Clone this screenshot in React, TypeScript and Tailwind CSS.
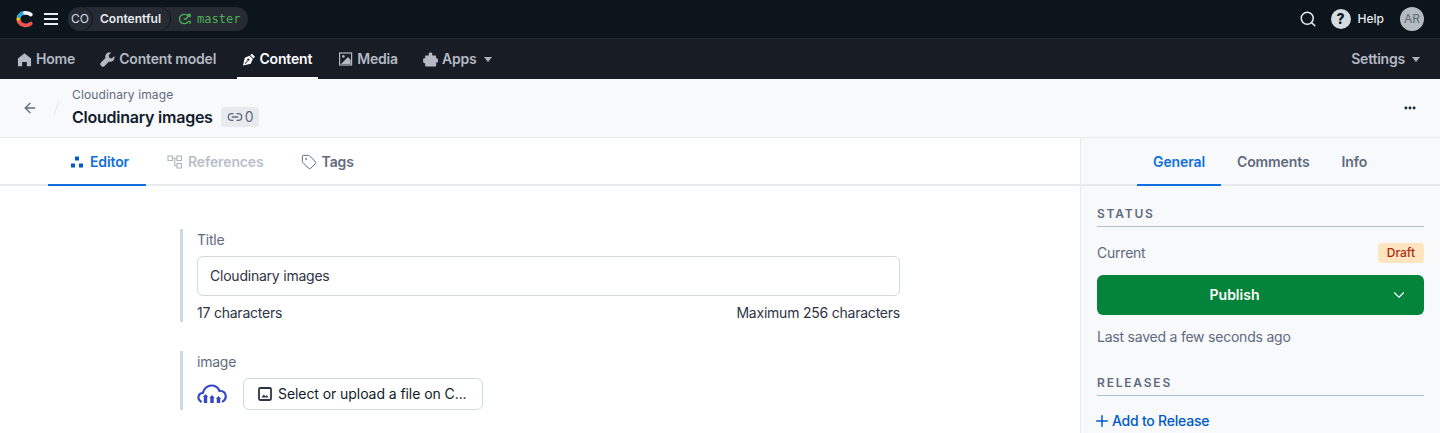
import type { ReactNode } from "react";
import { ArrowLeft, ChevronDown, Link2, MoreHorizontal, Plus, Search, Tag } from "lucide-react";

function Logo() {
  return (
    <svg width="18" height="18" viewBox="0 0 18 18" fill="none" strokeWidth="3.8" strokeLinecap="round">
      <path d="M3 11.500A6.300 6.300 0 0 1 3 6.500" stroke="#ffda00" />
      <path d="M14.800 13.600C11.500 16.300 5.400 16.100 3 11.700" stroke="#ee5350" />
      <path d="M3 6.400A6.400 6.400 0 0 1 8.500 2.800" stroke="#2fa8e0" />
      <path d="M9 2.800C11.300 2.700 13.300 3.300 14.800 4.500" stroke="#f5f7f9" />
    </svg>
  );
}

function HomeIcon() {
  return (
    <svg width="15" height="15" viewBox="0 0 16 16" fill="currentColor">
      <path d="M8 1.200 1 7v7.600c0 .4.3.7.7.7h3.800v-4.600h5v4.600h3.800c.4 0 .7-.3.7-.7V7z" />
    </svg>
  );
}

function WrenchIcon() {
  return (
    <svg width="15" height="15" viewBox="0 0 16 16" fill="currentColor">
      <path d="M15.200 4.200 12.600 6.800 9.900 6.200 9.200 3.500 11.900.9C9.800.2 7.800.8 6.700 2 5.600 3.200 5.300 4.800 5.800 6.300L.8 11.400c-.8.8-.8 2.100 0 2.900l.9.9c.8.8 2.100.8 2.900 0l5.100-5c1.500.5 3.100.2 4.300-.9 1.200-1.200 1.800-3.100 1.200-5.100z" />
    </svg>
  );
}

function PenIcon() {
  return (
    <svg width="15" height="15" viewBox="0 0 15 15" fill="currentColor">
      <path
        fillRule="evenodd"
        d="M0 15 2.200 5.500 8 3 12 7 9.500 12.800zM6.500 6.300a1.400 1.400 0 1 0 .01 0zM2 12.300 5.300 9l.7.7-3.300 3.300z"
      />
      <path d="M8.800 2.200 10.800 .3 14.700 4.200 12.800 6.200z" />
    </svg>
  );
}

function MediaIcon() {
  return (
    <svg width="14" height="14" viewBox="0 0 14 14" fill="none">
      <rect x="0.600" y="1" width="12" height="12" stroke="currentColor" strokeWidth="1.200" />
      <path d="M2 12 9 5 11.600 7.800V12z" fill="currentColor" />
      <circle cx="4.400" cy="4.400" r="1.300" fill="currentColor" />
    </svg>
  );
}

function PuzzleIcon() {
  return (
    <svg width="15" height="15" viewBox="0 0 16 16" fill="currentColor">
      <path d="M6 2.300C6 1.200 6.900.5 8 .5s2 .7 2 1.800c0 .5-.2.9-.4 1.300h3.600c.5 0 .8.3.8.8v2.600c.4-.3.8-.4 1.200-.4.5 0 .8 1 .8 2.400s-.3 2.400-.8 2.400c-.4 0-.8-.1-1.200-.4v3.600c0 .5-.3.8-.8.8H3.100c-.5 0-.8-.3-.8-.8v-3c-.4.3-.8.4-1.100.4C.5 11.400 0 10.500 0 9s.5-2.400 1.200-2.400c.3 0 .7.100 1.100.400V4.400c0-.5.300-.8.800-.8h3.300C6.200 3.200 6 2.800 6 2.300z" />
    </svg>
  );
}

function BranchIcon() {
  return (
    <svg width="14" height="14" viewBox="0 0 15 14" fill="none" stroke="#4fae55" strokeWidth="1.500">
      <path d="M10.800 4.300A5 5 0 1 0 10.800 9.700" />
      <path d="M6 7h2.500L12.500 2.500M10 2h3v3" />
      <path d="M10.500 9.500h2.500V12" />
    </svg>
  );
}

function EditorIcon() {
  return (
    <svg width="14" height="14" viewBox="0 0 14 14" fill="#0059c8">
      <rect x="5" y="1.500" width="4" height="4" rx="0.500" />
      <rect x="1" y="8.500" width="4" height="4" rx="0.500" />
      <rect x="9" y="8.500" width="4" height="4" rx="0.500" />
    </svg>
  );
}

function ReferencesIcon() {
  return (
    <svg width="16" height="14" viewBox="0 0 16 14" fill="none" stroke="#aeb4c0" strokeWidth="1.100">
      <rect x="1" y="1" width="4.500" height="4.500" />
      <rect x="10" y="1" width="4.500" height="4.500" />
      <rect x="10" y="8.500" width="4.500" height="4.500" />
      <path d="M5.500 3.200H10M7.800 3.200V10.700H10" />
    </svg>
  );
}

function CloudinaryIcon() {
  return (
    <svg width="30" height="20" viewBox="0 0 30 20" fill="none">
      <path
        d="M3.800 17.500C1.800 16.200 1.100 14 1.600 12.200c.5-2 2.200-3.200 4.200-3.200C6.700 4.300 10.600 1.500 14.500 1.500c3.700 0 6.600 2.200 7.900 5.300 3.500-.3 6.400 2.100 6.400 5.500 0 2.300-1.100 4-3 5.100"
        stroke="#3448c5"
        strokeWidth="2.200"
        strokeLinecap="round"
      />
      <path
        d="M8.500 10 5.800 13h1v6h3.400v-6h1zM15 11 12.300 14h1v5h3.400v-5h1zM21.500 12 18.800 15h1v4h3.400v-4h1z"
        fill="#3448c5"
      />
    </svg>
  );
}

function ImageIcon() {
  return (
    <svg width="14" height="14" viewBox="0 0 14 14" fill="none">
      <rect x="1" y="1" width="12" height="12" rx="1.200" stroke="#2c3444" strokeWidth="1.800" />
      <path d="M3.500 10.500 5.800 7.500 7.500 9.500 8.800 8 10.500 10.500z" fill="#2c3444" />
    </svg>
  );
}

function Caret() {
  return <span className="ml-[7px] h-0 w-0 border-x-[4px] border-t-[5px] border-x-transparent border-t-[#aeb4c0]" />;
}

function NavItem({ icon, label, active, caret }: { icon: ReactNode; label: string; active?: boolean; caret?: boolean }) {
  return (
    <div
      className={`flex h-10 items-center gap-[4px] border-y-2 border-t-transparent px-[6px] text-sm font-semibold ${
        active ? "border-b-white text-white" : "border-b-transparent text-[#b4b9c3]"
      }`}
    >
      {icon}
      <span className="flex items-center">
        {label}
        {caret && <Caret />}
      </span>
    </div>
  );
}

function SectionHeading({ children }: { children: ReactNode }) {
  return (
    <div className="border-b border-[#aebfd0] pb-[4px] text-xs leading-4 font-semibold tracking-[0.15em] text-[#5f6a80]">
      {children}
    </div>
  );
}

export default function App() {
  return (
    <div className="flex h-[433px] w-[1440px] flex-col overflow-hidden bg-white font-['Inter',sans-serif] tracking-[-0.014em] text-[#2c3444]">
      <div className="flex h-[39px] shrink-0 items-center border-b border-[#23272f] bg-[#0c141c] pr-4 pl-4 tracking-normal">
        <Logo />
        <div className="ml-[10px] flex flex-col gap-[3px]">
          <span className="h-[2px] w-[14px] bg-[#e8ebef]" />
          <span className="h-[2px] w-[14px] bg-[#e8ebef]" />
          <span className="h-[2px] w-[14px] bg-[#e8ebef]" />
        </div>
        <div className="ml-[10px] flex h-6 items-center rounded-full bg-[#252a33] pr-2 text-xs">
          <div className="z-20 flex h-6 w-6 shrink-0 items-center justify-center rounded-full bg-[#252a33] text-[#d3dce0] shadow-[1px_0_0_#0c141c]">
            CO
          </div>
          <div className="z-10 -ml-3 flex h-6 items-center rounded-r-full pr-[9px] pl-5 font-semibold text-[#e8ebef] shadow-[1px_0_0_#0c141c]">
            Contentful
          </div>
          <div className="ml-2 flex items-center gap-[5px] font-['DejaVu_Sans_Mono',monospace] text-[#4fae55]">
            <BranchIcon />
            <span className="text-[12px]">master</span>
          </div>
        </div>
        <div className="ml-auto flex items-center">
          <Search className="mr-[1px] size-[18px] text-[#e8ebef]" strokeWidth={2} />
          <div className="ml-[13px] flex size-5 items-center justify-center rounded-full bg-[#d3dce0] text-sm leading-none font-extrabold text-[#0c141c]">
            ?
          </div>
          <span className="ml-[7px] text-xs font-medium text-[#e8ebef]">Help</span>
          <div className="ml-4 flex size-6 items-center justify-center rounded-full bg-[#b4bcc0] text-xs text-[#5f6a70]">
            AR
          </div>
        </div>
      </div>

      <div className="flex h-10 shrink-0 items-center bg-[#181c25] pr-[20px] pl-[11px] tracking-[-0.011em]">
        <NavItem icon={<HomeIcon />} label="Home" />
        <div className="ml-[13px]">
          <NavItem icon={<WrenchIcon />} label="Content model" />
        </div>
        <div className="ml-[15px] w-[81px]">
          <NavItem icon={<PenIcon />} label="Content" active />
        </div>
        <div className="ml-[15px]">
          <NavItem icon={<MediaIcon />} label="Media" />
        </div>
        <div className="ml-[13px]">
          <NavItem icon={<PuzzleIcon />} label="Apps" caret />
        </div>
        <div className="ml-auto flex items-center text-sm font-semibold tracking-[-0.015em] text-[#b4b9c3]">
          Settings
          <Caret />
        </div>
      </div>

      <div className="flex h-[59px] shrink-0 items-center border-b border-[#e7ebee] bg-[#f7f9fa] pr-[23px] pl-[22px]">
        <ArrowLeft className="size-4 text-[#5f6a80]" strokeWidth={2} />
        <span className="ml-[18px] h-4 w-px rotate-[20deg] bg-[#e7ebee]" />
        <div className="ml-[15px] flex flex-col">
          <span className="text-xs leading-4 tracking-[0.01em] text-[#5f6a80]">Cloudinary image</span>
          <div className="mt-[2px] flex items-center">
            <span className="text-base leading-6 font-semibold tracking-[-0.015em] text-[#111b2b]">Cloudinary images</span>
            <span className="ml-2 flex h-5 items-center gap-[2px] rounded bg-[#e7ebee] px-[6px] text-sm text-[#5f6a80]">
              <Link2 className="size-4" />0
            </span>
          </div>
        </div>
        <MoreHorizontal className="ml-auto size-[14px] text-[#111b2b]" strokeWidth={3} />
      </div>

      <div className="flex min-h-0 flex-1">
        <div className="min-w-0 flex-1">
          <div className="flex h-12 gap-[4px] border-b-2 border-[#e7ebee] pl-12 tracking-[-0.008em]">
            <div className="-mb-[2px] flex w-[98px] items-center justify-center gap-[6px] border-y-2 border-t-transparent border-b-[#0f6fe0] pl-[5px] text-sm font-semibold text-[#0f6fe0]">
              <EditorIcon />
              Editor
            </div>
            <div className="ml-[17px] flex items-center gap-[5px] pt-[2px] text-sm font-semibold text-[#b8bec9]">
              <ReferencesIcon />
              References
            </div>
            <div className="ml-[33px] flex items-center gap-[5px] pt-[2px] text-sm font-semibold text-[#5f6a80]">
              <Tag className="size-4" strokeWidth={1.5} />
              Tags
            </div>
          </div>

          <div className="ml-[180px] w-[720px] pt-[43px]">
            <div className="border-l-[3px] border-[#cfd9e0] pt-px pl-[14px]">
              <div className="text-sm leading-5 text-[#5f6a80]">Title</div>
              <div className="mt-[6px] flex h-10 items-center rounded-md border border-[#cfd9e0] px-3 text-sm text-[#2c3444]">
                Cloudinary images
              </div>
              <div className="mt-[7px] flex h-[19px] justify-between text-sm leading-5 text-[#2c3444]">
                <span>17 characters</span>
                <span>Maximum 256 characters</span>
              </div>
            </div>
            <div className="mt-[29px] border-l-[3px] border-[#cfd9e0] pt-px pl-[14px]">
              <div className="text-sm leading-5 text-[#5f6a80]">image</div>
              <div className="mt-[6px] flex items-center">
                <CloudinaryIcon />
                <div className="ml-[16px] flex h-8 w-[240px] items-center gap-[6px] rounded-md border border-[#cfd9e0] bg-white px-[14px] text-sm tracking-[-0.005em] whitespace-nowrap text-[#111b2b]">
                  <ImageIcon />
                  Select or upload a file on C...
                </div>
              </div>
            </div>
          </div>
        </div>

        <div className="w-[360px] shrink-0 border-l border-[#e7ebee] bg-[#f7f9fa]">
          <div className="flex h-12 border-b-2 border-[#e7ebee] pl-[56px] text-sm font-semibold tracking-[-0.008em] text-[#5f6a80]">
            <div className="-mb-[2px] flex w-[84px] items-center justify-center border-y-2 border-t-transparent border-b-[#0f6fe0] text-[#0f6fe0]">
              General
            </div>
            <div className="ml-[16px] flex items-center pt-[2px]">Comments</div>
            <div className="ml-[32px] flex items-center pt-[2px]">Info</div>
          </div>
          <div className="px-[16px] pt-[20px]">
            <SectionHeading>STATUS</SectionHeading>
            <div className="mt-[16px] flex h-5 items-center justify-between text-sm text-[#5f6a80]">
              <span>Current</span>
              <span className="rounded bg-[#ffe4c0] px-[9px] text-xs leading-5 font-medium tracking-normal text-[#b02a0c]">Draft</span>
            </div>
            <div className="mt-[12px] flex h-10 items-stretch rounded-md bg-[#03843a] text-sm font-semibold tracking-normal text-white">
              <div className="flex flex-1 items-center justify-center">Publish</div>
              <div className="flex w-[52px] items-center justify-center border-l border-[#078039]">
                <ChevronDown className="size-[18px]" strokeWidth={1.5} />
              </div>
            </div>
            <div className="mt-[12px] text-sm leading-5 text-[#5f6a80]">Last saved a few seconds ago</div>
            <div className="mt-[28px]">
              <SectionHeading>RELEASES</SectionHeading>
            </div>
            <div className="mt-[15px] flex items-center gap-[1px] text-sm font-medium text-[#0059c8]">
              <Plus className="-ml-1 size-[18px]" strokeWidth={2} />
              Add to Release
            </div>
          </div>
        </div>
      </div>
    </div>
  );
}
